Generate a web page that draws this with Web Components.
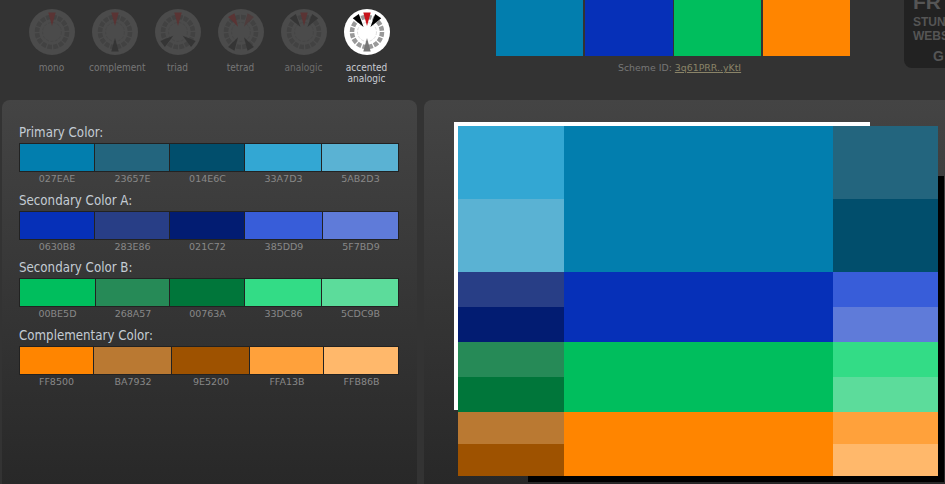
<!DOCTYPE html>
<html>
<head>
<meta charset="utf-8">
<title>Color Scheme</title>
<style>
  html, body { margin: 0; height: 484px; overflow: hidden; background: #333; }
  body { font-family: "DejaVu Sans", Verdana, sans-serif; }
</style>
</head>
<body>
<scheme-app>
  <scheme-top slot="top">
    <mode-dial label="mono" spokes="0"></mode-dial>
    <mode-dial label="complement" spokes="0,180"></mode-dial>
    <mode-dial label="triad" spokes="0,128,232"></mode-dial>
    <mode-dial label="tetrad" spokes="-30,30,150,210"></mode-dial>
    <mode-dial label="analogic" spokes="0,-35,35"></mode-dial>
    <mode-dial label="accented analogic" spokes="0,-35,35,180" active></mode-dial>
  </scheme-top>
  <side-panel slot="side">
    <color-row title="Primary Color:" widths="76,75,75,77,77" colors="027EAE,23657E,014E6C,33A7D3,5AB2D3"></color-row>
    <color-row title="Secondary Color A:" widths="76,75,75,78,76" colors="0630B8,283E86,021C72,385DD9,5F7BD9"></color-row>
    <color-row title="Secondary Color B:" widths="77,74,75,77,77" colors="00BE5D,268A57,00763A,33DC86,5CDC9B"></color-row>
    <color-row title="Complementary Color:" widths="75,78,78,74,75" colors="FF8500,BA7932,9E5200,FFA13B,FFB86B"></color-row>
  </side-panel>
  <preview-panel slot="main"></preview-panel>
</scheme-app>

<script>
const LABEL_FONT = '"DejaVu Sans Condensed", "DejaVu Sans", sans-serif';

class SchemeApp extends HTMLElement {
  connectedCallback() {
    if (this.shadowRoot) return;
    const shadow = this.attachShadow({ mode: "open" });
    shadow.innerHTML = `
      <style>
        :host { display: block; width: 945px; height: 484px; overflow: hidden; }
        .top { height: 100px; }
        .panels { display: flex; gap: 7px; padding-left: 2px; height: 384px; }
      </style>
      <div class="top"><slot name="top"></slot></div>
      <div class="panels">
        <slot name="side"></slot>
        <slot name="main"></slot>
      </div>
    `;
  }
}

class SchemeTop extends HTMLElement {
  connectedCallback() {
    if (this.shadowRoot) return;
    const shadow = this.attachShadow({ mode: "open" });
    shadow.innerHTML = `
      <style>
        :host { display: flex; position: relative; height: 100px; }
        .dials { display: flex; padding: 9px 0 0 20px; width: 496px; box-sizing: border-box; flex: none; }
        .scheme { width: 354px; flex: none; }
        .bars { display: flex; height: 56px; }
        .bars div { height: 56px; }
        .id {
          margin-top: 6px; padding-left: 122px;
          font-size: 9.4px; line-height: 12px; color: #777;
        }
        .id a { color: #8a8468; text-decoration: underline; }
        .ad {
          position: absolute; left: 904px; top: -20px; width: 41px; height: 88px;
          box-sizing: border-box; background: #222; border-radius: 8px 0 0 8px;
          padding: 12px 0 0 9px; overflow: hidden; white-space: nowrap;
          font-family: "Liberation Sans", Arial, sans-serif; font-weight: bold;
          color: #555;
        }
        .ad b { display: block; font-size: 21px; line-height: 20px; margin-bottom: 4px; }
        .ad span { display: block; font-size: 12px; line-height: 13.5px; }
        .ad i { display: block; font-style: normal; font-size: 14px; line-height: 14px; margin: 6px 0 0 20px; }
      </style>
      <div class="dials"><slot></slot></div>
      <div class="scheme">
        <div class="bars">
          <div style="width:87px;margin-right:2px;background:#027EAE"></div>
          <div style="width:88px;margin-right:1px;background:#0630B8"></div>
          <div style="width:87px;margin-right:2px;background:#00BE5D"></div>
          <div style="width:87px;background:#FF8500"></div>
        </div>
        <div class="id">Scheme ID: <a>3q61PRR..yKtI</a></div>
      </div>
      <div class="ad"><b>FR</b><span>STUN</span><span>WEBS</span><i>G</i></div>
    `;
  }
}

class ModeDial extends HTMLElement {
  connectedCallback() {
    if (this.shadowRoot) return;
    const active = this.hasAttribute("active");
    const label = this.getAttribute("label");
    const spokes = this.getAttribute("spokes").split(",").map(Number);
    const disc = active ? "#fff" : "#4b4b4b";
    const seg = active ? "#999" : "#424242";
    const inner = active ? "#ddd" : "#464646";
    const wedges = spokes.map((a, i) => {
      // first wedge is the base hue, the rest are its partners
      let fill = active ? (a === 180 ? "#777" : "#000") : "#353535";
      if (i === 0) fill = active ? "#c8141c" : "#5a3434";
      if (label === "tetrad" && i === 1) fill = "#4e3c3c";
      return `<polygon points="-3.7,-19.5 3.7,-19.5 0,-6" fill="${fill}" transform="rotate(${a})"/>`;
    }).join("");
    const shadow = this.attachShadow({ mode: "open" });
    shadow.innerHTML = `
      <style>
        :host {
          display: block; width: 63px; text-align: center;
          font-family: ${LABEL_FONT};
          font-size: 10px; line-height: 11px;
          color: ${active ? "#c8ccd4" : label === "analogic" ? "#6c6c6c" : "#777"};
        }
        svg { display: block; margin: 0 auto 7px; width: 46px; height: 46px; }
        .label { padding: 0 6px; }
      </style>
      <svg viewBox="-23 -23 46 46">
        <circle r="23" fill="${disc}"/>
        <circle r="15" fill="none" stroke="${seg}" stroke-width="4.5" pathLength="16" stroke-dasharray=".78 .22"/>
        <circle r="9.5" fill="none" stroke="${inner}" stroke-width="1" stroke-dasharray="3 1.5"/>
        ${wedges}
      </svg>
      <div class="label">${label}</div>
    `;
  }
}

class SidePanel extends HTMLElement {
  connectedCallback() {
    if (this.shadowRoot) return;
    const shadow = this.attachShadow({ mode: "open" });
    shadow.innerHTML = `
      <style>
        :host {
          display: block; flex: none; width: 415px; height: 384px; box-sizing: border-box;
          padding: 25px 0 0 17px; border-radius: 8px 8px 0 0;
          background: linear-gradient(#444, #282828);
        }
      </style>
      <slot></slot>
    `;
  }
}

class ColorRow extends HTMLElement {
  connectedCallback() {
    if (this.shadowRoot) return;
    const colors = this.getAttribute("colors").split(",");
    const widths = this.getAttribute("widths").split(",");
    const cells = colors.map((c) => `<div class="cell" style="background:#${c}"></div>`).join("");
    const names = colors.map((c) => `<div class="name">${c}</div>`).join("");
    const cols = widths.map((w) => w + "px").join(" ");
    const shadow = this.attachShadow({ mode: "open" });
    shadow.innerHTML = `
      <style>
        :host { display: block; height: 67.5px; width: 380px; }
        .title {
          font-family: ${LABEL_FONT};
          font-size: 13.2px; line-height: 16px; height: 18px; color: #c4ccd4; white-space: nowrap;
        }
        .grid { display: grid; grid-template-columns: ${cols}; width: 380px; }
        .cell { height: 27px; border: 1px solid #222; border-left-width: 0; }
        .cell:first-child { border-left-width: 1px; }
        .name { text-align: center; font-size: 9.5px; line-height: 13px; color: #888; }
      </style>
      <div class="title">${this.getAttribute("title")}</div>
      <div class="grid">${cells}${names}</div>
    `;
  }
}

class PreviewPanel extends HTMLElement {
  connectedCallback() {
    if (this.shadowRoot) return;
    const band = (left, main, right, h) => `
      <div class="band" style="height:${h}px">
        <div class="col" style="width:106px">${left.map((c) => `<div style="background:#${c}"></div>`).join("")}</div>
        <div style="width:269px;background:#${main}"></div>
        <div class="col" style="width:105px">${right.map((c) => `<div style="background:#${c}"></div>`).join("")}</div>
      </div>`;
    const shadow = this.attachShadow({ mode: "open" });
    shadow.innerHTML = `
      <style>
        :host {
          display: block; flex: none; position: relative; width: 530px; height: 384px; box-sizing: border-box;
          padding: 26px 0 0 34px; border-radius: 8px 0 0 0;
          background: linear-gradient(#444, #282828);
        }
        .white { position: absolute; left: 30px; top: 22px; width: 416px; height: 288px; background: #fff; }
        .black { position: absolute; left: 104px; top: 76px; width: 416px; height: 306px; background: #000; }
        .colors { position: relative; width: 480px; }
        .band { display: flex; }
        .col { display: flex; flex-direction: column; }
        .col div { flex: 1; }
      </style>
      <div class="white"></div>
      <div class="black"></div>
      <div class="colors">
        ${band(["33A7D3", "5AB2D3"], "027EAE", ["23657E", "014E6C"], 146)}
        ${band(["283E86", "021C72"], "0630B8", ["385DD9", "5F7BD9"], 70)}
        ${band(["268A57", "00763A"], "00BE5D", ["33DC86", "5CDC9B"], 70)}
        ${band(["BA7932", "9E5200"], "FF8500", ["FFA13B", "FFB86B"], 64)}
      </div>
    `;
  }
}

customElements.define("scheme-app", SchemeApp);
customElements.define("scheme-top", SchemeTop);
customElements.define("mode-dial", ModeDial);
customElements.define("side-panel", SidePanel);
customElements.define("color-row", ColorRow);
customElements.define("preview-panel", PreviewPanel);
</script>
</body>
</html>
